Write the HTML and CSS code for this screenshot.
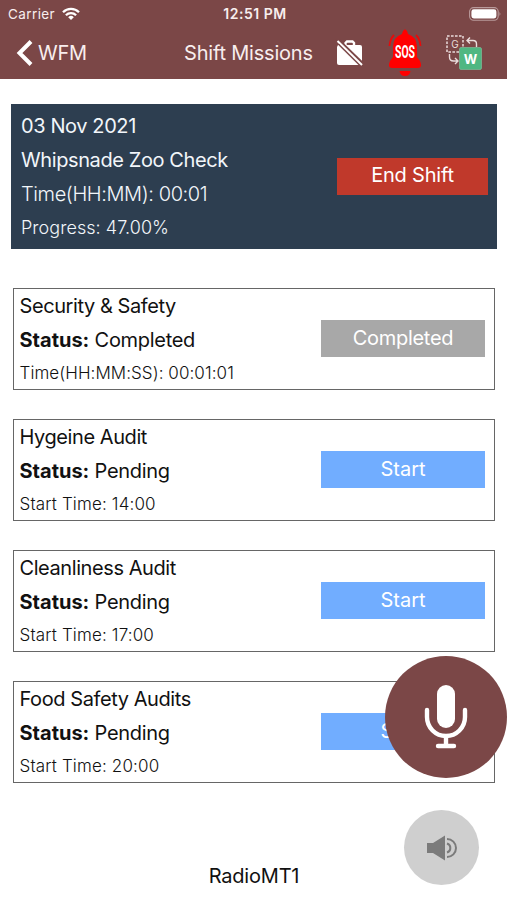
FILE: index.html
```html
<!DOCTYPE html>
<html lang="en">
<head>
    <meta charset="UTF-8">
    <meta name="viewport" content="width=device-width, initial-scale=1.0">
    <title>Shift Missions</title>
    <link rel="stylesheet" href="styles.css">
</head>
<body>
    <header>
        <div class="status-bar">
            <div class="carrier">
                <span>Carrier</span>
                <svg width="18" height="14" viewBox="0 0 18 14" fill="none" stroke="#fff" stroke-width="2.3">
                    <path d="M1 5.2a11.4 11.4 0 0 1 16 0"/>
                    <path d="M3.9 8.2a7.2 7.2 0 0 1 10.2 0"/>
                    <path d="M9 13L6.2 10.2a4 4 0 0 1 5.6 0z" fill="#fff" stroke="none"/>
                </svg>
            </div>
            <span class="clock">12:51 PM</span>
            <svg class="battery" width="33" height="14" viewBox="0 0 33 14">
                <rect x=".6" y=".6" width="28.6" height="12.6" rx="4" fill="none" stroke="#b99a9b" stroke-width="1.1"/>
                <rect x="2.4" y="2.3" width="25" height="9.2" rx="2.4" fill="#fff"/>
                <path d="M30.5 4.8q1.8 2 0 4.2z" fill="#b99a9b"/>
            </svg>
        </div>
        <div class="nav-bar">
            <a class="back">
                <svg width="17" height="26" viewBox="0 0 17 26" fill="none" stroke="#fff" stroke-width="4">
                    <path d="M15 1.5L3.5 13 15 24.5"/>
                </svg>
                <span>WFM</span>
            </a>
            <h1>Shift Missions</h1>
            <svg class="icon-case" width="28" height="28" viewBox="0 0 28 28">
                <path d="M10.500 7V4L12 2.500H17.500L19 4V7" fill="none" stroke="#fff" stroke-width="2.400"/>
                <path d="M3 6H25Q27 6 27 8V23Q27 26 24 26H4Q2 26 2 24V8z" fill="#fff"/>
                <path d="M1 -1.500L30 26.500" stroke="#7b4747" stroke-width="2.600"/>
                <path d="M2.500 2L27 26" stroke="#fff" stroke-width="2"/>
                <path d="M3.500 5.200L25 26.500" stroke="#7b4747" stroke-width="1.500"/>
            </svg>
            <div class="icon-sos">
                <svg width="36" height="48" viewBox="0 0 36 48">
                    <path d="M18 .5q2 0 3 4.500q9 3 9 13v10l3 4q3 7-2 7H5q-5 0-2-7l3-4v-10q0-10 9-13q1-4.500 3-4.500z" fill="#f00"/>
                    <path d="M12.500 42h11q-.5 5-5.500 5t-5.500-5z" fill="#f00"/>
                    <path d="M7 6Q3 10 2.500 17M29 6Q33 10 33.500 17" fill="none" stroke="#e60b0b" stroke-width="1.800"/>
                </svg>
                <span>SOS</span>
            </div>
            <svg class="icon-translate" width="38" height="38" viewBox="0 0 38 38">
                <rect x="2" y="2" width="16" height="16" fill="none" stroke="#eadcdc" stroke-width="1.5" stroke-dasharray="2.6 1.400"/>
                <text x="10" y="14" text-anchor="middle" class="g-text">G</text>
                <path d="M31.500 13V10Q31.500 6.500 28 6.500H22M25 3.500L22 6.500l3 3" fill="none" stroke="#eadcdc" stroke-width="1.4"/>
                <path d="M4.500 20v3q0 4 4 4h4M10 24l3 3-3 3" fill="none" stroke="#eadcdc" stroke-width="1.400"/>
                <rect x="14.500" y="13.500" width="22" height="22" rx="1.500" fill="#4fb782" stroke="#83c6a3" stroke-width=".6"/>
                <text x="25.500" y="29.500" text-anchor="middle" class="w-text">W</text>
            </svg>
        </div>
    </header>

    <main>
        <section class="shift">
            <div class="shift-info">
                <p class="shift-date">03 Nov 2021</p>
                <p class="shift-name">Whipsnade Zoo Check</p>
                <p class="shift-time">Time(HH:MM): 00:01</p>
                <p class="shift-progress">Progress: 47.00%</p>
            </div>
            <button type="button" class="btn btn-end">End Shift</button>
        </section>

        <section class="mission">
            <div class="mission-info">
                <h2>Security &amp; Safety</h2>
                <p class="status"><b>Status:</b> Completed</p>
                <p class="time elapsed">Time(HH:MM:SS): 00:01:01</p>
            </div>
            <button type="button" class="btn btn-done">Completed</button>
        </section>

        <section class="mission">
            <div class="mission-info">
                <h2>Hygeine Audit</h2>
                <p class="status"><b>Status:</b> Pending</p>
                <p class="time">Start Time: 14:00</p>
            </div>
            <button type="button" class="btn">Start</button>
        </section>

        <section class="mission">
            <div class="mission-info">
                <h2>Cleanliness Audit</h2>
                <p class="status"><b>Status:</b> Pending</p>
                <p class="time">Start Time: 17:00</p>
            </div>
            <button type="button" class="btn">Start</button>
        </section>

        <section class="mission">
            <div class="mission-info">
                <h2>Food Safety Audits</h2>
                <p class="status"><b>Status:</b> Pending</p>
                <p class="time">Start Time: 20:00</p>
            </div>
            <button type="button" class="btn">Start</button>
        </section>
    </main>

    <footer>RadioMT1</footer>

    <!-- floating controls -->
    <div class="fab mic">
        <svg width="44" height="66" viewBox="0 0 44 66">
            <rect x="13" y="1" width="18" height="43" rx="9" fill="#fff"/>
            <path d="M3 26v7a19 19 0 0 0 38 0v-7M22 52v10M14 62h16" fill="none" stroke="#fff" stroke-width="4.400" stroke-linecap="round"/>
        </svg>
    </div>
    <div class="fab speaker">
        <svg width="32" height="26" viewBox="0 0 32 26">
            <path d="M1 8h6L19 .5v25L7 18H1z" fill="#7b7b7b"/>
            <path d="M21 8.500a4.700 4.700 0 0 1 0 9M21 4a9 9 0 0 1 0 18" fill="none" stroke="#7b7b7b" stroke-width="2"/>
        </svg>
    </div>
</body>
</html>
```
FILE: styles.css
```css
body {
    font-family: Inter, "Liberation Sans", sans-serif;
    margin: 0;
    height: 900px;
    position: relative;
    overflow: hidden;
    background-color: #fff;
    color: #111;
}
h1, h2, p {
    margin: 0;
    font-weight: 400;
}
header {
    height: 79px;
    background-color: #7b4747;
    color: #f8eeee;
}
.status-bar {
    display: grid;
    grid-template-columns: 1fr auto 1fr;
    align-items: center;
    height: 27px;
    padding: 0 5px 0 8px;
    font-size: 13.5px;
    letter-spacing: 0.4px;
}
.carrier {
    display: flex;
    align-items: center;
    gap: 7px;
}
.clock {
    font-weight: 600;
    font-size: 14px;
    letter-spacing: 0.5px;
}
.battery {
    justify-self: end;
}
.nav-bar {
    display: flex;
    align-items: center;
    height: 51px;
    padding-left: 16px;
    font-size: 20px;
    letter-spacing: -0.2px;
}
.back {
    display: flex;
    align-items: center;
    gap: 5px;
    width: 168px;
}
h1 {
    width: 151px;
    font-size: 20px;
    white-space: nowrap;
}
.icon-sos {
    position: relative;
    height: 48px;
    margin-left: 24px;
}
.icon-sos span {
    position: absolute;
    top: 13px;
    left: -2px;
    width: 40px;
    color: #fff;
    font: 700 18px/20px Roboto, sans-serif;
    letter-spacing: 0;
    text-align: center;
    transform: scaleX(0.58);
}
.icon-translate {
    margin-left: 22px;
}
.g-text {
    font: 10px Inter, sans-serif;
    fill: #eadcdc;
}
.w-text {
    font: 700 13px Inter, sans-serif;
    fill: #fff;
}
.shift {
    display: flex;
    align-items: center;
    justify-content: space-between;
    box-sizing: border-box;
    height: 145px;
    margin: 25px 10px 0 11px;
    padding: 0 9px 0 10px;
    background-color: #2d3e50;
    color: #f2f6fa;
    font-size: 20px;
    line-height: 34px;
    letter-spacing: -0.4px;
}
.shift-time {
    font-weight: 300;
}
.shift-progress {
    font-size: 18px;
    font-weight: 300;
    letter-spacing: 0.05px;
}
.btn {
    width: 164px;
    height: 37px;
    padding: 0 0 2px;
    border: none;
    background-color: #71adff;
    color: #fff;
    font-family: inherit;
    font-size: 20px;
}
.btn-end {
    width: 151px;
    background-color: #c0392b;
    letter-spacing: -0.2px;
}
.btn-done {
    background-color: #a8a8a8;
    letter-spacing: -0.3px;
}
.shift .btn {
    margin-bottom: 1px;
}
.mission {
    display: flex;
    align-items: center;
    justify-content: space-between;
    box-sizing: border-box;
    height: 102px;
    margin: 29px 12px 0 13px;
    padding: 0 9px 0 5.5px;
    border: 1px solid #666;
}
.mission .btn {
    margin-bottom: 1px;
}
.shift + .mission {
    margin-top: 39px;
}
h2, .status {
    font-size: 20px;
    line-height: 34px;
}
h2 {
    letter-spacing: -0.42px;
}
.status {
    letter-spacing: -0.3px;
}
.status b {
    letter-spacing: 0;
}
.time {
    font-size: 17px;
    font-weight: 300;
    line-height: 32px;
    letter-spacing: 0.15px;
}
.elapsed {
    letter-spacing: 0.07px;
}
footer {
    margin-top: 78px;
    padding-left: 1px;
    text-align: center;
    font-size: 20px;
    line-height: 30px;
    letter-spacing: -0.2px;
}
.fab {
    position: absolute;
    display: flex;
    align-items: center;
    justify-content: center;
    border-radius: 50%;
}
.mic {
    top: 656px;
    right: 0;
    width: 122px;
    height: 122px;
    background-color: #7b4747;
}
.speaker {
    top: 810px;
    right: 28px;
    width: 75px;
    height: 75px;
    background-color: #cfcfcf;
}
```
